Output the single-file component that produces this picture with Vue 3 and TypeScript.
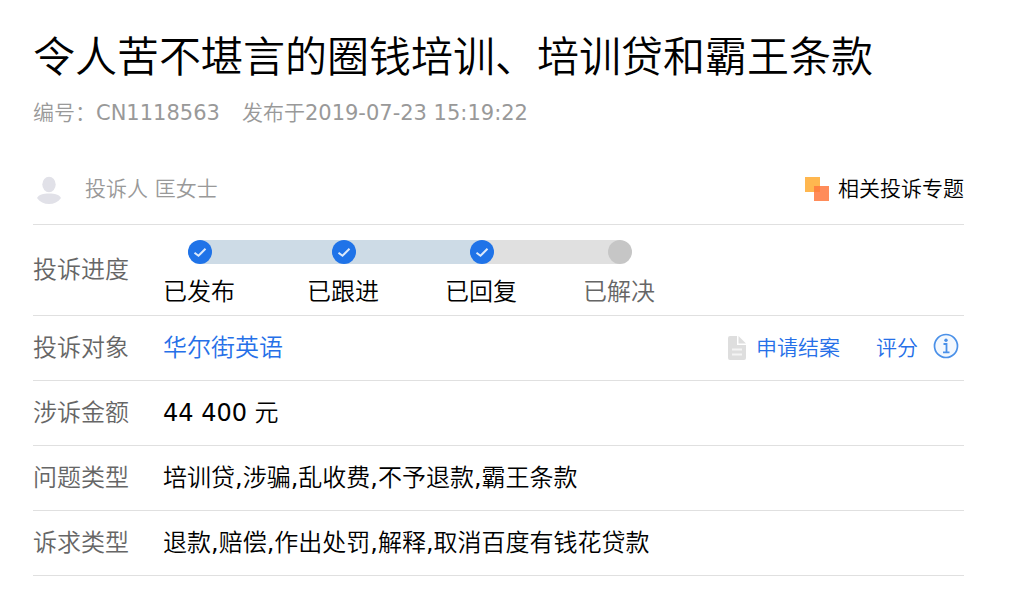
<script setup lang="ts">
interface Step {
  label: string
  done: boolean
}

interface Detail {
  label: string
  value: string
}

const steps: Step[] = [
  { label: '已发布', done: true },
  { label: '已跟进', done: true },
  { label: '已回复', done: true },
  { label: '已解决', done: false },
]

const details: Detail[] = [
  { label: '涉诉金额', value: '44 400 元' },
  { label: '问题类型', value: '培训贷,涉骗,乱收费,不予退款,霸王条款' },
  { label: '诉求类型', value: '退款,赔偿,作出处罚,解释,取消百度有钱花贷款' },
]
</script>

<template>
  <main class="complaint">
    <h1 class="title">令人苦不堪言的圈钱培训、培训贷和霸王条款</h1>
    <p class="meta">
      <span>编号：CN1118563</span>
      <span>发布于2019-07-23 15:19:22</span>
    </p>

    <div class="author">
      <svg class="avatar" viewBox="0 0 30 30" aria-hidden="true">
        <ellipse cx="16" cy="10.5" rx="6.7" ry="7.7" />
        <path d="M4 24C6 20.500 10 19.500 16 19.500S26 20.500 28 24C25 28 21 30 16 30S7 28 4 24Z" />
      </svg>
      <span class="author-name">投诉人 匡女士</span>
      <a class="topic" href="#topics">
        <svg class="topic-icon" viewBox="0 0 24 24" aria-hidden="true">
          <rect width="15" height="15" fill="#ffb74f" />
          <rect x="9" y="9" width="15" height="15" fill="#ff8c5a" />
          <rect x="9" y="9" width="6" height="6" fill="#ff8240" />
        </svg>
        <span>相关投诉专题</span>
      </a>
    </div>

    <dl class="details">
      <div class="row">
        <dt>投诉进度</dt>
        <dd>
          <ol class="steps">
            <li v-for="step in steps" :key="step.label" class="step" :class="{ done: step.done }">
              <span class="dot">
                <svg v-if="step.done" viewBox="0 0 24 24" aria-hidden="true">
                  <path d="M6.500 12.800L10.500 15.800L17.500 8.800" />
                </svg>
              </span>
              <span class="step-label">{{ step.label }}</span>
            </li>
          </ol>
        </dd>
      </div>
      <div class="row">
        <dt>投诉对象</dt>
        <dd class="target">
          <a class="company" href="#company">华尔街英语</a>
          <a class="action close-case" href="#close">
            <svg class="doc-icon" viewBox="0 0 18 24" aria-hidden="true">
              <path d="M2 0H9V9H18V22Q18 24 16 24H2Q0 24 0 22V2Q0 0 2 0Z" fill="#dedede" />
              <path d="M10.500 0L18 7.500H10.500Z" fill="#dedede" />
              <path d="M4 13.500H14M4 18.500H14" stroke="#f4f4f4" stroke-width="2" />
            </svg>
            <span>申请结案</span>
          </a>
          <a class="action" href="#rate">评分</a>
          <button class="info" type="button" aria-label="说明">
            <svg viewBox="0 0 26 26" aria-hidden="true">
              <circle cx="13" cy="13" r="11.500" fill="#f3f8fe" stroke="#4a90e8" stroke-width="1.700" />
              <circle cx="13" cy="7.300" r="1.700" fill="#4a90e8" />
              <path d="M10.500 11H13.500V19M10 19.300H16.500" fill="none" stroke="#4a90e8" stroke-width="1.800" />
            </svg>
          </button>
        </dd>
      </div>
      <div v-for="item in details" :key="item.label" class="row">
        <dt>{{ item.label }}</dt>
        <dd>{{ item.value }}</dd>
      </div>
    </dl>
  </main>
</template>

<style>
body {
  margin: 0;
  background: #fff;
}
</style>

<style scoped>
.complaint {
  padding: 28px 54px 26px 33px;
  color: #000;
  font-family: "DejaVu Sans", "Noto Sans CJK SC DemiLight", "Noto Sans CJK SC", sans-serif;
  font-size: 24px;
  font-weight: 400;
}

.title {
  margin: 0;
  font-size: 42px;
  font-weight: 400;
  line-height: 60px;
}

.meta {
  display: flex;
  gap: 22px;
  margin: 10px 0 26px;
  color: #999;
  font-size: 21px;
  line-height: 30px;
}

.author {
  display: flex;
  align-items: center;
  height: 70px;
  border-bottom: 1px solid #e0e0e0;
  color: #999;
  font-size: 21px;
  line-height: 30px;
}

.avatar {
  width: 30px;
  height: 30px;
}

.avatar {
  fill: #e1e1e8;
}

.author-name {
  margin-left: 22px;
}

.topic {
  display: flex;
  align-items: center;
  gap: 9px;
  margin-left: auto;
  color: #000;
  text-decoration: none;
}

.topic-icon {
  width: 24px;
  height: 24px;
}

.details {
  margin: 0;
}

.row {
  display: flex;
  align-items: center;
  min-height: 64px;
  border-bottom: 1px solid #e0e0e0;
  line-height: 36px;
}

dt {
  flex: none;
  width: 130px;
  color: #666;
}

dd {
  flex: 1;
  margin: 0;
}

.steps {
  display: grid;
  grid-template-columns: 144px 138px 138px 72px;
  margin: 0;
  padding: 15px 0 5px;
  list-style: none;
}

.step {
  position: relative;
  color: #666;
}

.step.done {
  color: #000;
}

.step:not(:last-child)::before {
  content: "";
  position: absolute;
  top: 0;
  left: 37px;
  width: 100%;
  height: 24px;
  background: #cddbe6;
}

.step:nth-last-child(2)::before {
  background: #e0e0e0;
}

.dot {
  position: relative;
  z-index: 1;
  display: block;
  width: 24px;
  height: 24px;
  margin: 0 0 10px 25px;
  border-radius: 50%;
  background: #c6c6c6;
}

.done .dot {
  background: #1f73e8;
}

.dot svg {
  display: block;
  fill: none;
  stroke: #dce9fb;
  stroke-width: 2;
}

.step-label {
  display: block;
}

.target {
  display: flex;
  align-items: center;
}

.company {
  margin-right: auto;
  color: #2670e8;
  text-decoration: none;
}

.action {
  margin-right: 15px;
  color: #2670e8;
  font-size: 21px;
  text-decoration: none;
}

.close-case {
  display: flex;
  align-items: center;
  gap: 10px;
  margin-right: 36px;
}

.doc-icon {
  width: 18px;
  height: 24px;
}

.info {
  width: 26px;
  height: 26px;
  margin: 0 5px 4px 0;
  padding: 0;
  border: 0;
  background: none;
  cursor: pointer;
}

.info svg {
  display: block;
}
</style>
